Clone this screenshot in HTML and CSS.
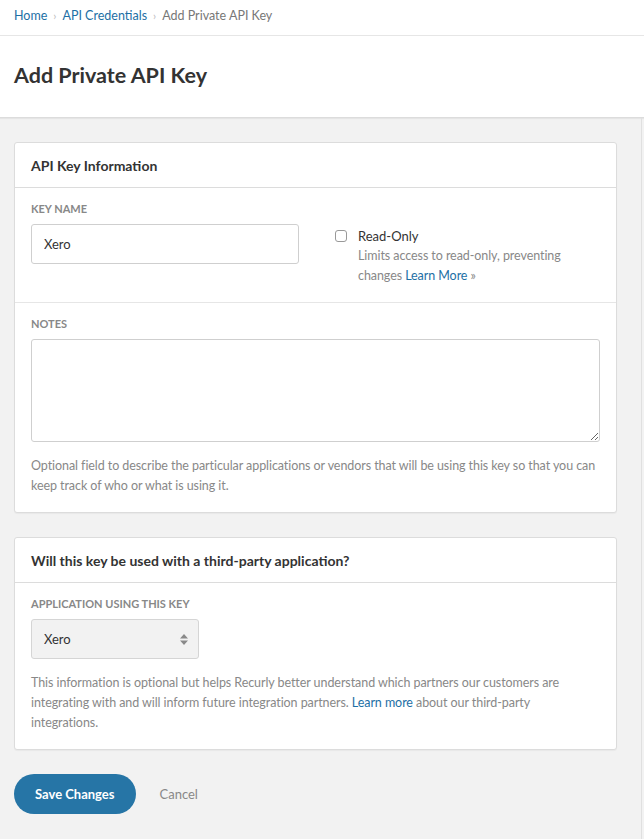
FILE: index.html
```html
<!DOCTYPE html>
<html lang="en">
<head>
  <meta charset="UTF-8" />
  <meta name="viewport" content="width=device-width, initial-scale=1" />
  <title>Add Private API Key</title>
  <link rel="stylesheet" href="styles.css">
</head>
<body>

  <!-- Migas de pan -->
  <nav class="breadcrumb">
    <a href="#">Home</a>
    <span class="sep">›</span>
    <a href="#">API Credentials</a>
    <span class="sep">›</span>
    <span class="actual">Add Private API Key</span>
  </nav>

  <header class="cabecera">
    <h1>Add Private API Key</h1>
  </header>

  <main class="contenido">
    <form class="formulario">

      <section class="tarjeta">
        <h2 class="tarjeta-titulo">API Key Information</h2>

        <div class="fila fila-doble">
          <div class="campo">
            <label class="etiqueta" for="nombre">Key Name</label>
            <input type="text" id="nombre" class="entrada" value="Xero" />
          </div>
          <div class="opcion">
            <input type="checkbox" id="solo-lectura" class="casilla" />
            <div>
              <label for="solo-lectura" class="opcion-titulo">Read-Only</label>
              <p class="ayuda">Limits access to read-only, preventing changes <a href="#">Learn More</a> »</p>
            </div>
          </div>
        </div>

        <div class="fila">
          <label class="etiqueta" for="notas">Notes</label>
          <textarea id="notas" class="area"></textarea>
          <p class="ayuda">Optional field to describe the particular applications or vendors that will be using this key so that you can keep track of who or what is using it.</p>
        </div>
      </section>

      <section class="tarjeta">
        <h2 class="tarjeta-titulo">Will this key be used with a third-party application?</h2>

        <div class="fila">
          <label class="etiqueta" for="aplicacion">Application using this key</label>
          <div class="selector">
            <select id="aplicacion">
              <option>Xero</option>
            </select>
            <svg class="flechas" width="8" height="11" viewBox="0 0 8 11">
              <path d="M4 0 L8 4.5 H0 Z M0 6.5 H8 L4 11 Z" fill="#8a8a8a"/>
            </svg>
          </div>
          <p class="ayuda ayuda-estrecha">This information is optional but helps Recurly better understand which partners our customers are integrating with and will inform future integration partners. <a href="#">Learn more</a> about our third-party integrations.</p>
        </div>
      </section>

      <div class="acciones">
        <button type="submit" class="boton">Save Changes</button>
        <a href="#" class="cancelar">Cancel</a>
      </div>

    </form>
  </main>

</body>
</html>
```

FILE: styles.css
```css
:root {
  --color-enlace: #1d6fa5;
  --color-boton: #2675a6;
  --color-texto: #333;
  --color-suave: #888;
  --color-borde: #dcdcdc;
  --color-fondo: #f2f2f2;
}

* {
  margin: 0;
  padding: 0;
  box-sizing: border-box;
}

body {
  font-family: 'Lato', 'Noto Sans', sans-serif;
  font-size: 13px;
  color: var(--color-texto);
  background: var(--color-fondo);
  min-height: 100vh;
}

a {
  color: var(--color-enlace);
  text-decoration: none;
}

/* Migas de pan */
.breadcrumb {
  background: #fff;
  height: 36px;
  padding: 0 14px 5px;
  display: flex;
  align-items: center;
  gap: 6px;
  font-size: 12.5px;
  border-bottom: 1px solid #e6e6e6;
}

.breadcrumb .sep {
  color: #bbb;
  font-size: 11px;
}

.breadcrumb .actual {
  color: #777;
}

/* Cabecera */
.cabecera {
  background: #fff;
  height: 82px;
  padding: 0 14px 4px;
  display: flex;
  align-items: center;
  border-bottom: 1px solid #dcdcdc;
  box-shadow: 0 1px 1px rgba(0, 0, 0, 0.05);
}

.cabecera h1 {
  font-size: 21.5px;
  font-weight: 700;
  color: #333;
}

/* Zona gris */
.contenido {
  margin-right: 2px;
  border-right: 1px solid #e0e0e0;
  padding: 24px 24px 24px 14px;
  min-height: calc(100vh - 118px);
}

.formulario {
  display: flex;
  flex-direction: column;
  gap: 24px;
}

.tarjeta {
  background: #fff;
  border: 1px solid var(--color-borde);
  border-radius: 3px;
  box-shadow: 0 1px 1px rgba(0, 0, 0, 0.04);
}

.tarjeta-titulo {
  font-size: 14px;
  font-weight: 700;
  color: #333;
  height: 45px;
  display: flex;
  align-items: center;
  padding: 0 16px;
  border-bottom: 1px solid var(--color-borde);
}

.fila {
  padding: 14px 16px 16px;
  display: flex;
  flex-direction: column;
}

.fila + .fila {
  border-top: 1px solid #e6e6e6;
}

.fila-doble {
  flex-direction: row;
  gap: 36px;
}

.campo {
  display: flex;
  flex-direction: column;
}

.etiqueta {
  font-size: 11px;
  font-weight: 700;
  text-transform: uppercase;
  color: var(--color-suave);
  margin-bottom: 9px;
}

.entrada {
  width: 268px;
  height: 40px;
  border: 1px solid #cfcfcf;
  border-radius: 3px;
  padding: 0 12px;
  font: inherit;
  color: #333;
}

.opcion {
  display: flex;
  gap: 11px;
  padding-top: 24px;
}

.casilla {
  appearance: none;
  width: 12px;
  height: 12px;
  border: 1px solid #999;
  border-radius: 3px;
  background: #fff;
  margin-top: 4px;
  flex-shrink: 0;
}

.opcion-titulo {
  display: block;
  font-size: 13px;
  line-height: 20px;
}

.opcion .ayuda {
  margin-top: 0;
  width: 230px;
}

.area {
  height: 103px;
  border: 1px solid #cfcfcf;
  border-radius: 3px;
  font: inherit;
  padding: 8px 12px;
}

.ayuda {
  margin-top: 14px;
  font-size: 12.5px;
  line-height: 20px;
  letter-spacing: -0.07px;
  color: var(--color-suave);
}

.ayuda-estrecha {
  max-width: 555px;
}

/* Selector de aplicacion */
.selector {
  position: relative;
  width: 168px;
}

.selector select {
  appearance: none;
  width: 100%;
  height: 40px;
  border: 1px solid #d5d5d5;
  border-radius: 3px;
  background: var(--color-fondo);
  padding: 0 12px;
  font: inherit;
  color: #333;
}

.flechas {
  position: absolute;
  right: 11px;
  top: 15px;
  pointer-events: none;
}

/* Botones */
.acciones {
  display: flex;
  align-items: center;
  gap: 24px;
}

.boton {
  background: var(--color-boton);
  color: #fff;
  border: none;
  border-radius: 20px;
  height: 40px;
  padding: 0 21px;
  font: inherit;
  font-weight: 700;
  cursor: pointer;
}

.cancelar {
  color: var(--color-suave);
}
```
